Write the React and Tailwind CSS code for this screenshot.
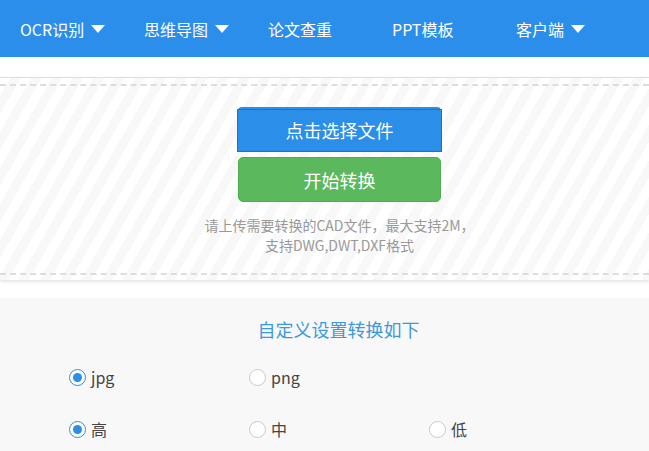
const font = { fontFamily: '"Noto Sans CJK SC", "Noto Sans", sans-serif' };

const navItems = [
  { label: "OCR识别", caret: true },
  { label: "思维导图", caret: true },
  { label: "论文查重", caret: false },
  { label: "PPT模板", caret: false },
  { label: "客户端", caret: true },
];

const Caret = () => (
  <svg width="14" height="8" viewBox="0 0 14 8" className="ml-[7px]">
    <path d="M0 0 L14 0 L7 8 Z" fill="#fff" />
  </svg>
);

const Radio = ({ checked, label }) => (
  <div className="flex items-center w-[180px]">
    <span
      className={
        checked
          ? "w-[17px] h-[17px] rounded-full border border-[#2b8ee8] bg-white flex items-center justify-center"
          : "w-[17px] h-[17px] rounded-full border border-[#c9c9c9] bg-white"
      }
    >
      {checked && <span className="w-[9px] h-[9px] rounded-full bg-[#2b8ee8]"></span>}
    </span>
    <span className="ml-[5px] text-[16px] leading-[24px] text-[#444]">{label}</span>
  </div>
);

const App = () => {
  return (
    <div className="w-[649px] h-[451px] overflow-hidden bg-white" style={font}>
      {/* top nav */}
      <div className="h-[57px] bg-[#2b8eea] flex items-center pl-[20px]">
        {navItems.map((item) => (
          <div key={item.label} className="w-[124px] flex items-center text-white text-[16px] leading-[20px]">
            {item.label}
            {item.caret && <Caret />}
          </div>
        ))}
      </div>

      {/* upload box */}
      <div className="mt-[20px] border-t border-[#dddddd] pt-[6px] pb-[5px] bg-[repeating-linear-gradient(120deg,#ffffff_0px,#ffffff_9px,#f8f8f8_9px,#f8f8f8_18px)] shadow-[0_2px_3px_rgba(0,0,0,0.1)]">
        <div className="border-y-2 border-dashed border-[#dddddd] pt-[21px] pb-[18px] pl-[30px] flex flex-col items-center">
          <button className="relative w-[203px] h-[45px] rounded-t-[4px] bg-[#2b8ee8] text-white text-[18px] leading-[24px]">
            <span className="absolute left-[-1px] right-[-1px] top-[2px] bottom-0 border border-[#a8405e]"></span>
            <span className="relative">点击选择文件</span>
          </button>
          <button className="mt-[5px] w-[203px] h-[45px] rounded-[5px] bg-[#5cb85c] border border-[#4cae4c] text-white text-[18px] leading-[24px]">
            开始转换
          </button>
          <div className="mt-[13px] text-center text-[14px] leading-[20px] text-[#999999]">
            <div>请上传需要转换的CAD文件，最大支持2M，</div>
            <div>支持DWG,DWT,DXF格式</div>
          </div>
        </div>
      </div>

      {/* settings */}
      <div className="mt-[18px] bg-[#f8f8f8] h-[200px] pt-[19px]">
        <div className="pl-[28px] text-center text-[18px] leading-[24px] text-[#3d99dc]">自定义设置转换如下</div>
        <div className="mt-[24px] pl-[69px] flex">
          <Radio checked label="jpg" />
          <Radio label="png" />
        </div>
        <div className="mt-[28px] pl-[69px] flex">
          <Radio checked label="高" />
          <Radio label="中" />
          <Radio label="低" />
        </div>
      </div>
    </div>
  );
};

export default App;
